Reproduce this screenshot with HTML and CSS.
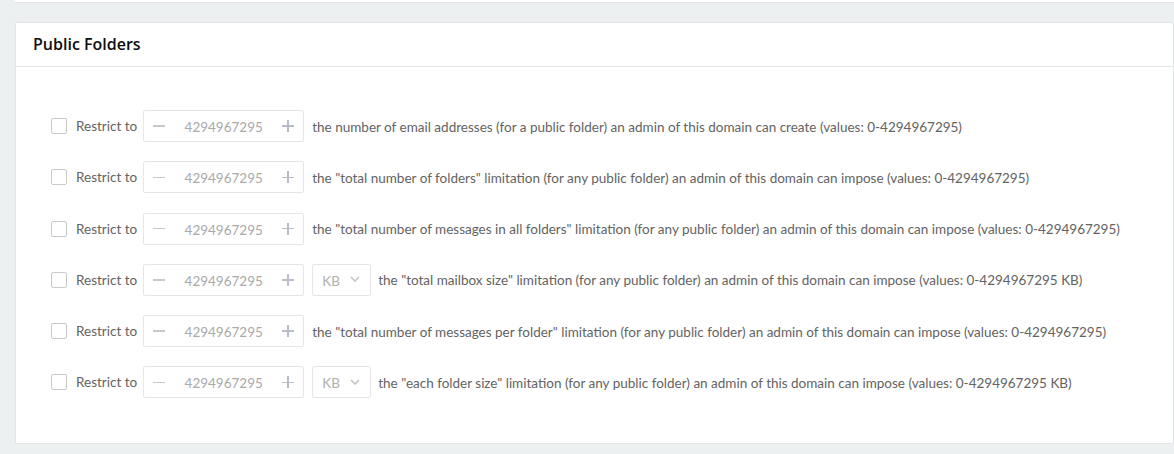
FILE: index.html
```html
<!DOCTYPE html>
<html>
<head>
<meta charset="utf-8">
<link rel="stylesheet" href="styles.css">
</head>
<body>
<div class="page">
  <div class="top-card"></div>
  <div class="card">
    <div class="card-header">Public Folders</div>
    <div class="card-body">
      <div class="row">
        <span class="checkbox"></span>
        <span class="label">Restrict to</span>
        <span class="spinner"><span class="minus"></span><span class="value">4294967295</span><span class="plus"></span></span>
        <span class="desc">the number of email addresses (for a public folder) an admin of this domain can create (values: 0-4294967295)</span>
      </div>
      <div class="row">
        <span class="checkbox"></span>
        <span class="label">Restrict to</span>
        <span class="spinner"><span class="minus"></span><span class="value">4294967295</span><span class="plus"></span></span>
        <span class="desc">the "total number of folders" limitation (for any public folder) an admin of this domain can impose (values: 0-4294967295)</span>
      </div>
      <div class="row">
        <span class="checkbox"></span>
        <span class="label">Restrict to</span>
        <span class="spinner"><span class="minus"></span><span class="value">4294967295</span><span class="plus"></span></span>
        <span class="desc">the "total number of messages in all folders" limitation (for any public folder) an admin of this domain can impose (values: 0-4294967295)</span>
      </div>
      <div class="row">
        <span class="checkbox"></span>
        <span class="label">Restrict to</span>
        <span class="spinner"><span class="minus"></span><span class="value">4294967295</span><span class="plus"></span></span>
        <span class="select">KB<svg class="chev" width="10" height="6" viewBox="0 0 10 6"><path d="M1 1l4 4 4-4" fill="none" stroke="#c4c4c4" stroke-width="1.6"/></svg></span>
        <span class="desc">the "total mailbox size" limitation (for any public folder) an admin of this domain can impose (values: 0-4294967295 KB)</span>
      </div>
      <div class="row">
        <span class="checkbox"></span>
        <span class="label">Restrict to</span>
        <span class="spinner"><span class="minus"></span><span class="value">4294967295</span><span class="plus"></span></span>
        <span class="desc">the "total number of messages per folder" limitation (for any public folder) an admin of this domain can impose (values: 0-4294967295)</span>
      </div>
      <div class="row">
        <span class="checkbox"></span>
        <span class="label">Restrict to</span>
        <span class="spinner"><span class="minus"></span><span class="value">4294967295</span><span class="plus"></span></span>
        <span class="select">KB<svg class="chev" width="10" height="6" viewBox="0 0 10 6"><path d="M1 1l4 4 4-4" fill="none" stroke="#c4c4c4" stroke-width="1.6"/></svg></span>
        <span class="desc">the "each folder size" limitation (for any public folder) an admin of this domain can impose (values: 0-4294967295 KB)</span>
      </div>
    </div>
  </div>
</div>
</body>
</html>
```

FILE: styles.css
```css
html, body {
  margin: 0;
  padding: 0;
  background: #edf0f0;
  font-family: "Lato", "Liberation Sans", sans-serif;
  overflow: hidden;
}
.page {
  padding-left: 15px;
  height: 454px;
}
.top-card {
  height: 2px;
  background: #fff;
  border-bottom: 1px solid #e2e4e4;
  margin-bottom: 19px;
}
.card {
  background: #fff;
  border: 1px solid #e3e5e5;
  border-radius: 2px;
  height: 422px;
  box-sizing: border-box;
}
.card-header {
  height: 44px;
  box-sizing: border-box;
  border-bottom: 1px solid #e4e6e6;
  padding: 10px 0 0 17px;
  font-family: "Open Sans", "Lato", sans-serif;
  font-size: 16px;
  font-weight: 600;
  color: #0d0d0d;
}
.card-body {
  padding: 43px 0 0 35px;
  display: flex;
  flex-direction: column;
  gap: 19.3px;
}
.row {
  display: flex;
  align-items: center;
  height: 32px;
  font-size: 13.5px;
  color: #636363;
  white-space: nowrap;
}
.checkbox {
  width: 16px;
  height: 16px;
  border: 1px solid #c9c9c9;
  border-radius: 2px;
  box-sizing: border-box;
  margin-right: 9px;
  flex: none;
}
.label {
  margin-right: 6px;
}
.spinner {
  width: 161px;
  height: 32px;
  box-sizing: border-box;
  border: 1px solid #e6e6e6;
  border-radius: 2px;
  display: flex;
  align-items: center;
  margin-right: 8px;
  flex: none;
}
.minus {
  width: 12px;
  height: 1.5px;
  background: #c8c8c8;
  margin-left: 9px;
}
.value {
  flex: 1;
  text-align: center;
  color: #aaa;
  padding-top: 2px;
}
.plus {
  width: 12px;
  height: 12px;
  margin-right: 9px;
  position: relative;
}
.plus::before, .plus::after {
  content: "";
  position: absolute;
  background: #b8bcc8;
}
.plus::before {
  left: 0; right: 0; top: 5.25px; height: 1.5px;
}
.plus::after {
  top: 0; bottom: 0; left: 5.25px; width: 1.5px;
}
.select {
  width: 59px;
  height: 32px;
  box-sizing: border-box;
  border: 1px solid #e6e6e6;
  border-radius: 2px;
  display: flex;
  align-items: center;
  justify-content: space-between;
  padding: 2px 10px 0 9px;
  color: #b0b0b0;
  margin-right: 7px;
  flex: none;
}
.chev {
  margin-top: -3px;
}
.desc {
  padding-top: 1px;
}
```
